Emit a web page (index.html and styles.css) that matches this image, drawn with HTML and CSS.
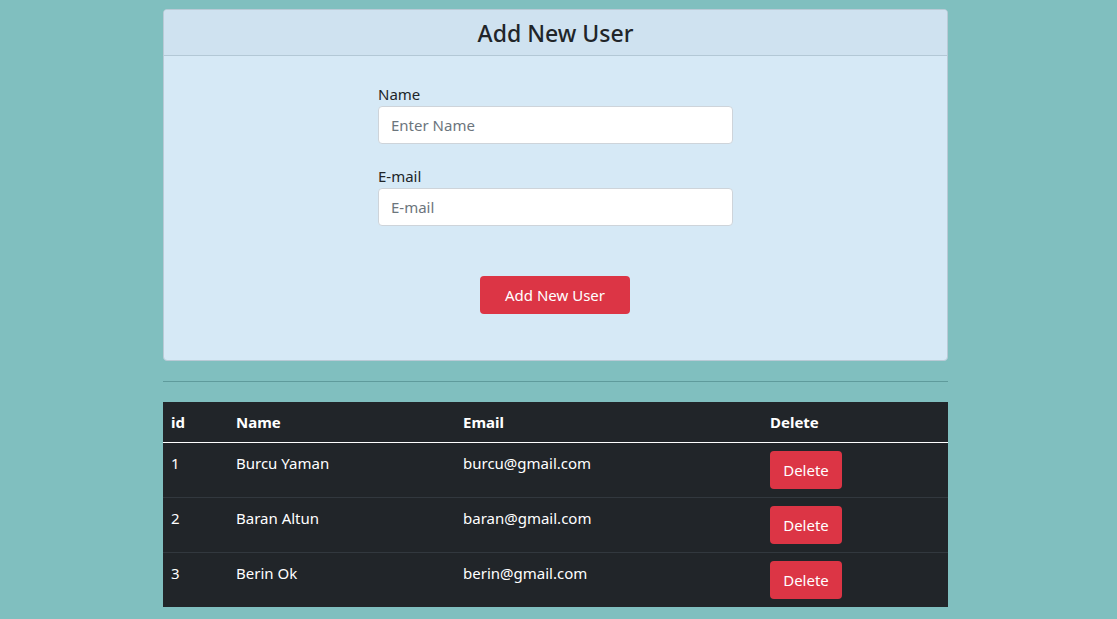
FILE: index.html
```html
<!DOCTYPE html>
<html>
<head>
<meta charset="utf-8">
<link rel="stylesheet" href="styles.css">
</head>
<body>
<div class="container">
  <div class="card">
    <div class="card-header"><h4 class="title">Add New User</h4></div>
    <div class="card-body">
      <form class="form">
        <div class="group">
          <label class="label">Name</label>
          <input class="input" type="text" placeholder="Enter Name">
        </div>
        <div class="group">
          <label class="label">E-mail</label>
          <input class="input" type="text" placeholder="E-mail">
        </div>
        <div class="actions">
          <button type="button" class="btn btn-add">Add New User</button>
        </div>
      </form>
    </div>
  </div>
  <hr class="divider">
  <table class="table">
    <thead>
      <tr><th class="c-id">id</th><th class="c-name">Name</th><th class="c-email">Email</th><th>Delete</th></tr>
    </thead>
    <tbody>
      <tr><td>1</td><td>Burcu Yaman</td><td>burcu@gmail.com</td><td><button type="button" class="btn btn-del">Delete</button></td></tr>
      <tr><td>2</td><td>Baran Altun</td><td>baran@gmail.com</td><td><button type="button" class="btn btn-del">Delete</button></td></tr>
      <tr><td>3</td><td>Berin Ok</td><td>berin@gmail.com</td><td><button type="button" class="btn btn-del">Delete</button></td></tr>
    </tbody>
  </table>
</div>
</body>
</html>
```
FILE: styles.css
```css
* { box-sizing: border-box; }
html, body { margin: 0; padding: 0; }
body {
  background: #80bfbf;
  font-family: "Noto Sans", "Open Sans", sans-serif;
  font-size: 16px;
  color: #212529;
  line-height: 1.5;
}
.container {
  width: 785px;
  margin-left: 163px;
  padding-top: 9px;
}
.card {
  background: #d6e9f6;
  border: 1px solid #b9cad6;
  border-radius: 4px;
  overflow: hidden;
}
.card-header {
  background: #cfe2f0;
  border-bottom: 1px solid #b3c8d6;
  height: 46px;
  padding-top: 2px;
  display: flex;
  align-items: center;
  justify-content: center;
}
.title {
  margin: 0;
  font-size: 23px;
  font-weight: 500;
  line-height: 1.2;
}
.card-body {
  height: 304px;
  display: flex;
  justify-content: center;
  padding-top: 26px;
}
.form { width: 355px; }
.group { margin-bottom: 20px; }
.label {
  display: block;
  font-size: 15px;
  line-height: 24px;
  margin-bottom: 0;
}
.input {
  display: block;
  width: 100%;
  height: 38px;
  border: 1px solid #ced4da;
  border-radius: 4px;
  background: #fff;
  padding: 6px 12px;
  font-family: inherit;
  font-size: 15px;
  color: #495057;
}
.input::placeholder { color: #6c757d; }
.actions {
  display: flex;
  justify-content: center;
  padding-top: 30px;
  padding-right: 1px;
}
.btn {
  border: none;
  border-radius: 4px;
  background: #dc3545;
  color: #fff;
  font-family: inherit;
  font-size: 15px;
  line-height: 24px;
  height: 38px;
  padding: 6px 12px;
}
.btn-add { width: 150px; }
.btn-del { width: 72px; }
.divider {
  margin: 20px 0;
  border: 0;
  border-top: 1px solid #5f9b9c;
  height: 0;
}
.table {
  width: 100%;
  border-collapse: collapse;
  background: #212529;
  color: #fff;
  font-size: 15px;
  margin-top: 20px;
}
.table th {
  text-align: left;
  font-weight: 700;
  padding: 8px;
  line-height: 24px;
  border-bottom: 1px solid #fff;
  vertical-align: top;
}
.table td {
  padding: 8px;
  line-height: 24px;
  vertical-align: top;
  border-top: 1px solid #32383e;
}
.table tbody tr:first-child td { border-top: none; }
.c-id { width: 65px; }
.c-name { width: 227px; }
.c-email { width: 307px; }
```
